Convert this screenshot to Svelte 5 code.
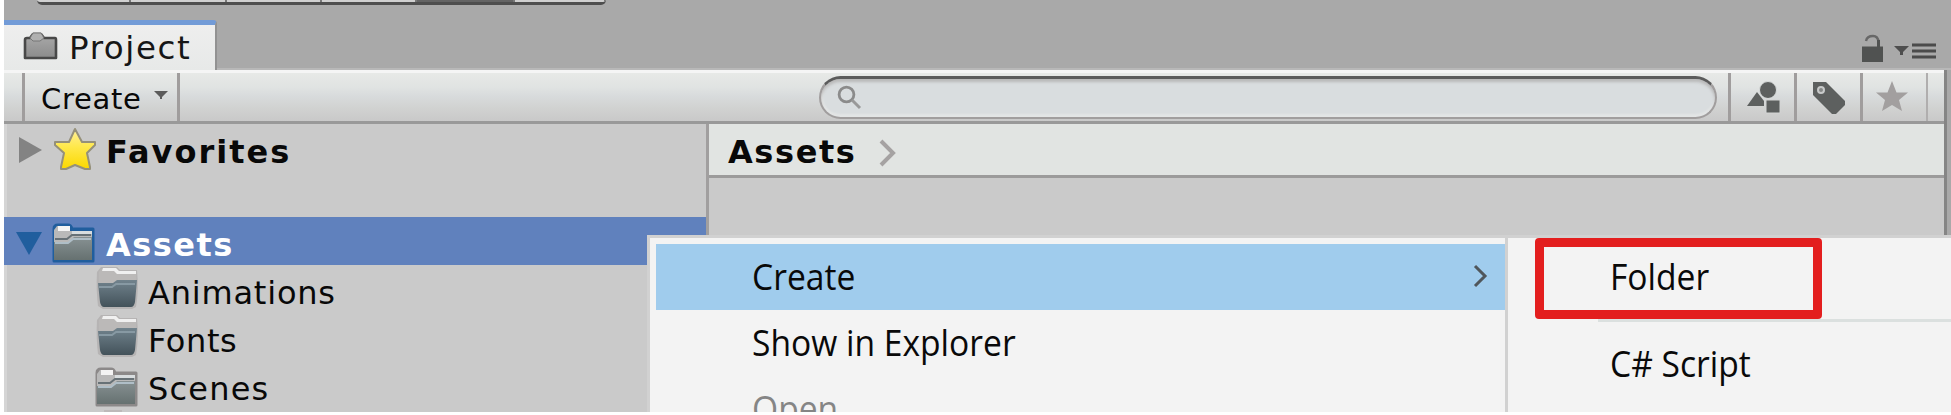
<script>
  const folders = [
    { name: 'Animations', open: true, spacing: 0.8 },
    { name: 'Fonts', open: true, spacing: 0.6 },
    { name: 'Scenes', open: false, spacing: 1.2 }
  ];
  const strip = [
    { width: 94, active: false },
    { width: 96, active: false },
    { width: 95, active: false },
    { width: 95, active: false },
    { width: 98, active: true },
    { width: 91, active: false }
  ];
</script>

{#snippet closedFolder(outline)}
  <svg class="folder" width="46" height="40" viewBox="0 0 46 40">
    <path d="M4 38V6Q4 2 8 2H18Q21 2 22 6H43V38Z" fill={outline} stroke={outline} stroke-width="3" stroke-linejoin="round" />
    <path d="M4 37V7L7 3H20V8H42V37Z" fill="#b9b9b9" />
    <path d="M8 3H20V8H8Z" fill="#f4f4f4" />
    <path d="M22 8H42V11H22Z" fill="#d8dddf" />
    <path d="M4 19H19L24 14H42V37H4Z" fill="url(#steel)" />
    <path d="M5 16H17L22 12H41" fill="none" stroke="#677176" stroke-width="2" />
    <path d="M5 20H18L23 16H41" fill="none" stroke="#afbec7" stroke-width="2" />
  </svg>
{/snippet}

{#snippet openFolder()}
  <svg class="folder" width="46" height="46" viewBox="0 0 46 46">
    <path d="M3 41Q1 25 2 7L6 2H22L25 5H42Q44 25 41 42L37 44H8Z" fill="#aaa7a7" opacity=".65" />
    <path d="M4 18V7L8 3H21L25 6H41V17L37 20H6Z" fill="#bbb9b8" />
    <path d="M8 3H21L24 6H41V9H22L19 6H7Z" fill="#f0f0f0" />
    <path d="M3 18H18L22 15H42L40 37Q39 42 36 42H9Q6 42 5 37Z" fill="url(#blueSteel)" />
    <path d="M4 22H17L21 19H40" fill="none" stroke="#8799a3" stroke-width="2" />
  </svg>
{/snippet}

<svg class="defs" width="0" height="0">
  <defs>
    <linearGradient id="steel" x1="0" y1="0" x2="0" y2="1"><stop stop-color="#879193" /><stop offset="1" stop-color="#667170" /></linearGradient>
    <linearGradient id="blueSteel" x1="0" y1="0" x2="0" y2="1"><stop stop-color="#71838d" /><stop offset="1" stop-color="#43525a" /></linearGradient>
    <linearGradient id="gold" x1="0" y1="0" x2="0" y2="1"><stop stop-color="#fff09b" /><stop offset=".45" stop-color="#ffe84a" /><stop offset="1" stop-color="#fbd800" /></linearGradient>
    <linearGradient id="ash" x1="0" y1="0" x2="0" y2="1"><stop stop-color="#aaa" /><stop offset="1" stop-color="#8b8b8b" /></linearGradient>
  </defs>
</svg>

<main>
  <header>
    <div class="strip">
      {#each strip as part}<i class:active={part.active} style="width: {part.width}px"></i>{/each}
    </div>
    <div class="tabs">
      <div class="tab">
        <svg width="36" height="30" viewBox="0 0 36 30">
          <path d="M2 27V9Q2 7 4 7H7L10 3H18L21 7H32Q33 7 33 9V27Z" fill="url(#ash)" stroke="#484848" stroke-width="2.6" stroke-linejoin="round" />
          <path d="M7 7L10 2H18L21 7L17 10H10Z" fill="#b0b0b0" stroke="#777" />
        </svg>
        <span>Project</span>
      </div>
      <div class="window-tools">
        <svg width="24" height="30" viewBox="0 0 24 30"><path d="M5 7Q6 2 12 2Q17 2 17.5 8V14" fill="none" stroke="#686868" stroke-width="2.4" /><path d="M17.5 6V14" stroke="#505251" stroke-width="3" /><path d="M1 12.5H22V28H1Z" fill="#505251" /></svg>
        <svg width="44" height="20" viewBox="0 0 44 20"><path d="M0 3H15L9 9V12H6V9Z" fill="#4e4e4e" /><path d="M18 2H42M18 8H42M18 14H42" stroke="#4b4b4b" stroke-width="3" /></svg>
      </div>
    </div>
  </header>

  <section class="panel">
    <div class="toolbar">
      <div class="create"><span>Create</span>
        <svg width="14" height="10" viewBox="0 0 14 10"><path d="M0 1H14L8 7V9H6V7Z" fill="#5b5b5b" /></svg>
      </div>
      <div class="search">
        <svg width="26" height="26" viewBox="0 0 26 26"><circle cx="9.5" cy="9.5" r="7.4" fill="none" stroke="#8b8b8b" stroke-width="2.8" /><path d="M15 15L23 23" stroke="#999" stroke-width="3" /></svg>
      </div>
      <div class="filters">
        <div><svg width="36" height="34" viewBox="0 0 36 34"><path d="M2 25L12 11L19 20V25Z" fill="#5d605f" /><circle cx="23" cy="9" r="8.5" fill="#5d605f" stroke="#d9dcdc" stroke-width="1" /><path d="M21 19H35V32H21Z" fill="#5d605f" stroke="#d3d4d4" stroke-width="1" /></svg></div>
        <div><svg width="36" height="34" viewBox="0 0 36 34"><path d="M2 1H15L34 20V24L25 33H21L2 14Z" fill="#5d605f" /><circle cx="10" cy="9" r="3" fill="#858887" stroke="#c8caca" stroke-width="2" /></svg></div>
        <div><svg width="36" height="34" viewBox="0 0 36 34"><path d="M17 0L21.5 11.5H33L24 19L27 30L17 24L7 30L10 19L1 11.5H12.5Z" fill="#a29f9f" /></svg></div>
      </div>
    </div>

    <div class="body">
      <aside>
        <div class="row favorites">
          <svg class="arrow" width="26" height="28" viewBox="0 0 26 28"><path d="M1 1L24 14L1 27Z" fill="#838383" /></svg>
          <svg class="star" width="46" height="46" viewBox="0 0 46 46"><path d="M23 4L30 17H43V20L35 28L38 42V44H33L23 40L14 44H9V42L12 28L3 20V17H17Z" fill="url(#gold)" stroke="#95907a" stroke-width="2" stroke-linejoin="round" /></svg>
          <span>Favorites</span>
        </div>
        <div class="row assets">
          <svg class="arrow" width="26" height="26" viewBox="0 0 26 26"><path d="M0 1H26L13 24Z" fill="#205e9e" /></svg>
          {@render closedFolder('#205e9e')}
          <span>Assets</span>
        </div>
        {#each folders as folder}
          <div class="row child">
            {#if folder.open}{@render openFolder()}{:else}{@render closedFolder('#8c8989')}{/if}
            <span style="letter-spacing: {folder.spacing}px">{folder.name}</span>
          </div>
        {/each}
        <div class="row next"><i></i></div>
      </aside>
      <div class="content">
        <div class="crumbs"><span>Assets</span>
          <svg width="18" height="30" viewBox="0 0 18 30"><path d="M2 3L14 15L2 27" fill="none" stroke="#a5a2a2" stroke-width="4" /></svg>
        </div>
      </div>
    </div>
  </section>

  <div class="menus">
    <div class="menu">
      <div class="item selected"><span>Create</span>
        <svg width="16" height="24" viewBox="0 0 16 24"><path d="M3 2L13 12L3 22" fill="none" stroke="#50565b" stroke-width="3" /></svg>
      </div>
      <div class="item"><span>Show in Explorer</span></div>
      <div class="item disabled"><span>Open</span></div>
    </div>
    <div class="menu submenu">
      <div class="item folder-item"><span>Folder</span></div>
      <hr />
      <div class="item script-item"><span>C# Script</span></div>
      <div class="highlight"></div>
    </div>
  </div>
</main>

<style>
  :global(body) { background: #fff; overflow: hidden; }
  .defs { position: absolute; }
  svg { display: block; flex: none; }
  main { box-sizing: border-box; position: relative; width: 1947px; height: 412px; margin-left: 4px; overflow: hidden; background: #a9a9a9; font-family: "DejaVu Sans", sans-serif; color: #080808; display: flex; flex-direction: column; }
  header { height: 70px; flex: none; display: flex; flex-direction: column; box-sizing: border-box; border-bottom: 2px solid #b8b8b8; }
  .strip { display: flex; flex: none; height: 5px; width: 569px; margin-left: 33px; box-sizing: border-box; border-bottom: 3px solid #4e4e4e; border-radius: 0 0 5px 5px; background: #d0d0d0; overflow: hidden; }
  .strip i { box-sizing: border-box; flex: none; border-right: 2px solid #777; }
  .strip i.active { background: #646464; }
  .tabs { display: flex; flex: none; justify-content: space-between; height: 48px; margin-top: 15px; }
  .tab { display: flex; box-sizing: border-box; width: 213px; height: 50px; border-top: 5px solid #729bd7; border-right: 2px solid #929292; border-radius: 0 4px 0 0; background: linear-gradient(#eee, #e7e9e8); padding-left: 19px; z-index: 1; }
  .tab svg { margin-top: 6px; }
  .tab span { font-size: 32.5px; line-height: 46px; margin-left: 10px; letter-spacing: 1.6px; color: #161616; }
  .window-tools { display: flex; margin-right: 13px; padding-top: 14px; gap: 9px; }
  .window-tools svg + svg { margin-top: 9px; }
  .panel { box-sizing: border-box; height: 342px; width: 1943px; border-right: 3px solid #858585; box-shadow: inset -3px 0 #dedede66; display: flex; flex-direction: column; }
  .toolbar { display: flex; box-sizing: border-box; height: 54px; border-top: 3px solid #f5f5f5; border-bottom: 3px solid #999; background: linear-gradient(#e7e9e7, #e0e3e2 30%, #d8dbdc 48%, #d1d2d1 73%, #c9c9c9); padding-left: 18px; }
  .create { box-sizing: border-box; display: flex; width: 158px; border: solid #a09d9d; border-width: 0 3px; padding-left: 16px; font-size: 29px; line-height: 53px; letter-spacing: .7px; }
  .create svg { margin: 17px 0 0 12px; }
  .search { box-sizing: border-box; width: 898px; height: 43px; margin: 3px 11px 0 639px; border: 2px solid #a19e9e; border-top: 3px solid #5b5b5b; border-radius: 22px; background: #d9dddf; box-shadow: inset 0 3px 3px #b9b9b9, inset 0 -3px 2px #e3e5e5, inset 2px 0 2px #e5e7e7; padding: 6px 0 0 16px; }
  .filters { display: flex; }
  .filters div { box-sizing: border-box; width: 66px; border-left: 3px solid #a09d9d; padding: 8px 0 0 14px; }
  .filters div:last-child { width: 68px; border-right: 2px solid #b0aeae; padding: 8px 0 0 12px; }
  .body { display: flex; height: 288px; }
  aside { width: 702px; background: #cacaca; border-right: 3px solid #a19f9f; box-shadow: inset 3px 0 #d5d5d5; overflow: hidden; flex: none; }
  .row { display: flex; height: 48px; line-height: 56px; font-size: 32px; }
  .favorites { padding-left: 14px; margin-bottom: 45px; font-weight: 700; letter-spacing: 2px; }
  .favorites .arrow { margin-top: 12px; }
  .favorites .star { margin: 1px 0 0 8px; }
  .favorites span { margin-left: 8px; }
  .assets { background: #6081bd; color: white; padding-left: 12px; font-weight: 700; letter-spacing: 1.5px; }
  .assets .arrow { margin-top: 14px; }
  .assets .folder { margin: 6px 0 0 8px; }
  .assets span { margin-left: 10px; }
  .child { padding-left: 91px; }
  .child span { margin-left: 7px; }
  .child:nth-last-child(2) .folder { margin: 6px 2px 0 -2px; }
  .next { padding-left: 100px; }
  .next i { width: 18px; height: 3px; margin-top: 1px; background: #bdb9b9; }
  .content { flex: 1; background: #cacaca; }
  .crumbs { display: flex; height: 51px; border-bottom: 3px solid #9c9b9b; background: #e1e4e2; padding-left: 19px; font-size: 32px; line-height: 56px; font-weight: 700; letter-spacing: 1.6px; }
  .crumbs svg { margin: 14px 0 0 22px; }
  .menus { position: absolute; left: 643px; top: 235px; width: 1304px; height: 180px; box-sizing: border-box; border: solid #d1d1d1; border-width: 3px 0 0 3px; display: flex; background: #f3f3f3; color: #090909; font-family: "Open Sans", sans-serif; }
  .menu { width: 855px; box-sizing: border-box; padding: 6px 0 0 6px; flex: none; }
  .item { box-sizing: border-box; height: 66px; font-size: 37px; line-height: 63px; padding-left: 96px; display: flex; white-space: nowrap; }
  .item span { display: inline-block; transform: scaleX(.908); transform-origin: left; }
  .selected { background: #a0cced; justify-content: space-between; }
  .selected svg { margin: 20px 17px 0 0; }
  .disabled { color: #858585; }
  .submenu { position: relative; width: 446px; border-left: 3px solid #d1d1d1; padding: 6px 0 0 90px; }
  .submenu .item { padding-left: 12px; }
  .folder-item { height: 75px; }
  hr { margin: 0; border: 0; height: 3px; background: #dbe0df; }
  .script-item { margin-top: 9px; }
  .highlight { position: absolute; left: 27px; top: 0; box-sizing: border-box; width: 287px; height: 81px; border: 9px solid #e31e1e; border-radius: 4px; }
</style>
